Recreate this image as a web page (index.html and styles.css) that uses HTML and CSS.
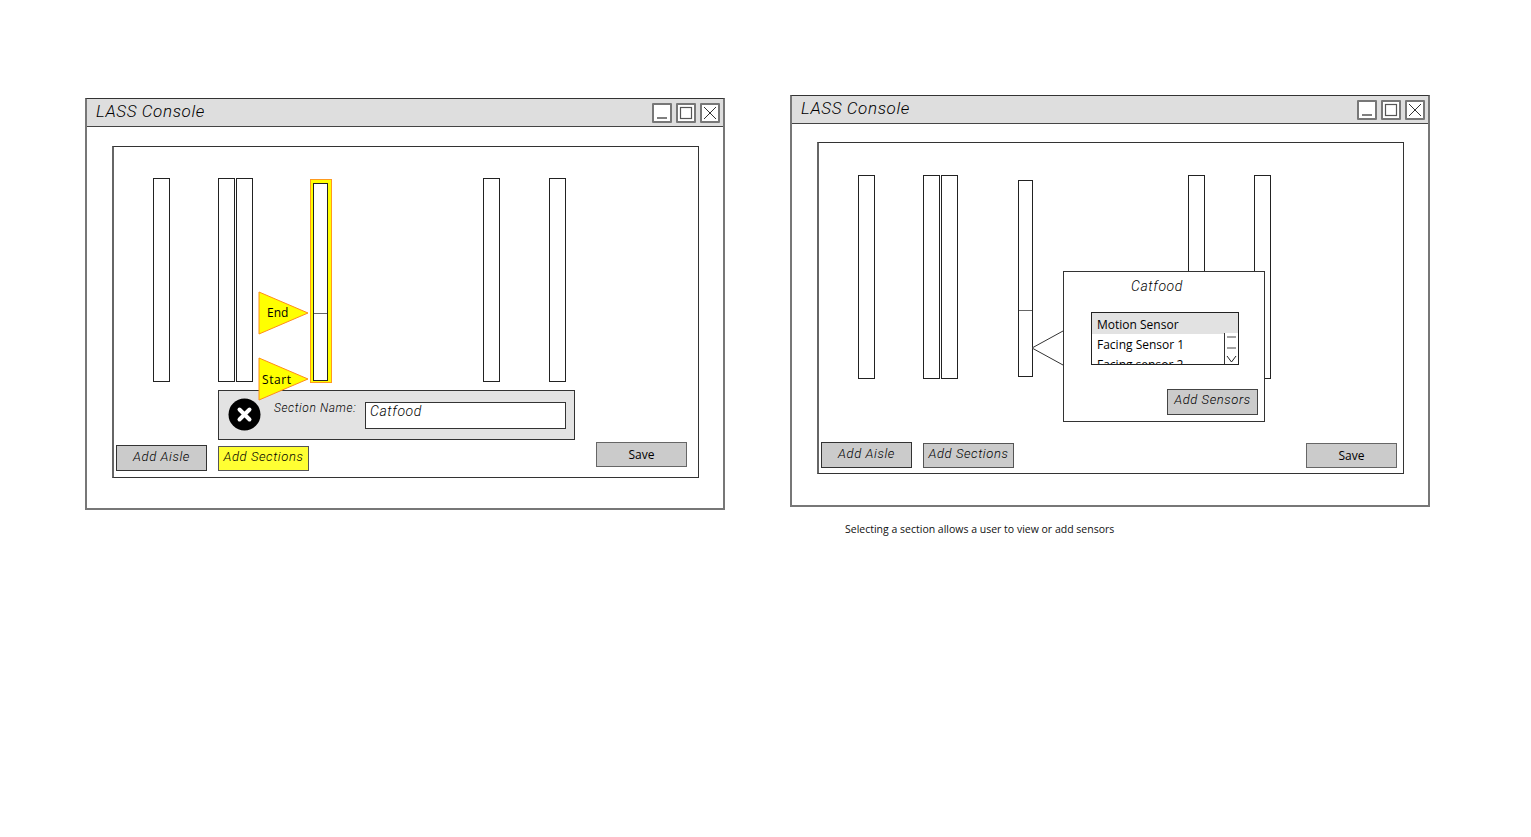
FILE: index.html
```html
<!DOCTYPE html>
<html lang="en">
<head>
    <meta charset="UTF-8">
    <meta name="viewport" content="width=device-width, initial-scale=1.0">
    <title>LASS Console mockups</title>
    <link rel="stylesheet" href="styles.css">
</head>
<body>
    <!-- Left window: adding a section -->
    <div class="window window-add">
        <div class="titlebar">
            <span class="title sketch">LASS Console</span>
            <div class="controls">
                <span class="control"><svg width="16" height="16"><path d="M3 13H13" stroke="#555" stroke-width="1.5"/></svg></span>
                <span class="control"><svg width="16" height="16"><rect x="2.5" y="2.5" width="11" height="11" fill="none" stroke="#555" stroke-width="1.2"/></svg></span>
                <span class="control"><svg width="16" height="16"><path d="M2 2L14 14M14 2L2 14" stroke="#333" stroke-width="1"/></svg></span>
            </div>
        </div>
        <div class="panel">
            <div class="aisles">
                <div class="aisle"></div>
                <div class="aisle wide-gap"></div>
                <div class="aisle tight-gap"></div>
                <div class="aisle section selected"><div class="section-top"></div></div>
                <div class="aisle far-gap"></div>
                <div class="aisle last-gap"></div>
            </div>

            <svg class="flag flag-end" width="52" height="45">
                <polygon points="1,1 50,22 1,43" fill="#ffff00" stroke="#ff8c1a" stroke-width="1"/>
                <text x="9" y="26">End</text>
            </svg>
            <svg class="flag flag-start" width="52" height="45">
                <polygon points="1,1 50,22 1,43" fill="#ffff00" stroke="#ff8c1a" stroke-width="1"/>
                <text class="flag-wide" x="4" y="27">Start</text>
            </svg>

            <div class="section-form">
                <svg class="close-icon" width="33" height="33">
                    <circle cx="16.5" cy="16.5" r="16" fill="#000"/>
                    <path d="M11.5 11.5L21.5 21.5M21.5 11.5L11.5 21.5" stroke="#fff" stroke-width="4" stroke-linecap="round"/>
                </svg>
                <span class="form-label sketch">Section Name:</span>
                <div class="form-input sketch">Catfood</div>
            </div>

            <div class="toolbar">
                <div class="btn sketch">Add Aisle</div>
                <div class="btn btn-yellow sketch">Add Sections</div>
                <div class="btn btn-save">Save</div>
            </div>
        </div>
    </div>

    <!-- Right window: section selected, sensors popup -->
    <div class="window window-view">
        <div class="titlebar">
            <span class="title sketch">LASS Console</span>
            <div class="controls">
                <span class="control"><svg width="16" height="16"><path d="M3 13H13" stroke="#555" stroke-width="1.5"/></svg></span>
                <span class="control"><svg width="16" height="16"><rect x="2.5" y="2.5" width="11" height="11" fill="none" stroke="#555" stroke-width="1.2"/></svg></span>
                <span class="control"><svg width="16" height="16"><path d="M2 2L14 14M14 2L2 14" stroke="#333" stroke-width="1"/></svg></span>
            </div>
        </div>
        <div class="panel">
            <div class="aisles">
                <div class="aisle"></div>
                <div class="aisle wide-gap"></div>
                <div class="aisle tight-gap"></div>
                <div class="aisle section"><div class="section-top"></div></div>
                <div class="aisle far-gap"></div>
                <div class="aisle last-gap"></div>
            </div>

            <div class="popup">
                <svg class="popup-arrow" width="33" height="36">
                    <path d="M32 1L1 18L32 35" fill="#fff" stroke="#333" stroke-width="1"/>
                </svg>
                <div class="popup-title sketch">Catfood</div>
                <div class="sensor-list">
                    <div class="sensor-row active">Motion Sensor</div>
                    <div class="sensor-row">Facing Sensor 1</div>
                    <div class="sensor-row">Facing sensor 2</div>
                    <svg class="scrollbar" width="13" height="31">
                        <path d="M2 4H11M2 15H11" stroke="#444" stroke-width="1"/>
                        <path d="M2 23L6.5 29L11 23" fill="none" stroke="#222" stroke-width="1"/>
                    </svg>
                </div>
                <div class="btn btn-sensors sketch">Add Sensors</div>
            </div>

            <div class="toolbar">
                <div class="btn sketch">Add Aisle</div>
                <div class="btn btn-plain sketch">Add Sections</div>
                <div class="btn btn-save">Save</div>
            </div>
        </div>
    </div>

    <p class="caption">Selecting a section allows a user to view or add sensors</p>
</body>
</html>
```

FILE: styles.css
```css
html, body {
    margin: 0;
    padding: 0;
    height: 100%;
    background: #fff;
    overflow: hidden;
}

body {
    position: relative;
    font-family: "Open Sans", sans-serif;
    color: #000;
}

/* thin scrawled lettering used for most wireframe labels */
.sketch {
    font-family: Roboto, sans-serif;
    font-weight: 300;
    font-style: italic;
    color: #000;
    letter-spacing: 0.6px;
}

.window {
    position: absolute;
    box-sizing: border-box;
    width: 640px;
    height: 412px;
    background: #fff;
    border: 2px solid #777;
    border-top: 1px solid #333;
}

.window-add {
    left: 85px;
    top: 98px;
}

.window-view {
    left: 790px;
    top: 95px;
}

.titlebar {
    display: flex;
    align-items: center;
    justify-content: space-between;
    box-sizing: border-box;
    height: 28px;
    padding: 0 3px 0 9px;
    background: #dedede;
    border-bottom: 1px solid #444;
}

.title {
    font-size: 17px;
    letter-spacing: 0.6px;
    margin-top: -4px;
}

.controls {
    display: flex;
    gap: 4px;
    margin-top: 1px;
}

.control {
    display: flex;
    width: 16px;
    height: 16px;
    border: 2px solid #777;
    border-radius: 1px;
    background: #fff;
}

.panel {
    position: relative;
    display: flex;
    flex-direction: column;
    box-sizing: border-box;
    width: 587px;
    height: 332px;
    margin: 19px 0 0 25px;
    background: #fff;
    border: 1px solid #333;
    border-left: 2px solid #666;
}

.window-view .panel {
    margin-top: 18px;
}

.aisles {
    display: flex;
    align-items: flex-start;
    padding: 31px 0 0 39px;
}

.window-view .aisles {
    padding-top: 32px;
}

.aisle {
    box-sizing: border-box;
    width: 17px;
    height: 204px;
    background: #fff;
    border: 1px solid #222;
}

.wide-gap {
    margin-left: 48px;
}

.tight-gap {
    margin-left: 1px;
}

.far-gap {
    margin-left: 155px;
}

.last-gap {
    margin-left: 49px;
}

.section {
    width: 15px;
    height: 197px;
    margin: 5px 0 0 60px;
}

.window-add .section {
    height: 198px;
}

.section-top {
    height: 129px;
    border-bottom: 1px solid #666;
}

.selected {
    box-shadow: 0 -1px 0 2px #ffff00, 1px -1px 0 2px #ffff00, 0 -1px 0 3px #ff9a1f, 1px -1px 0 3px #ff9a1f;
}

.flag {
    position: absolute;
    left: 144px;
}

.flag text {
    font-size: 12px;
    font-family: "Open Sans", sans-serif;
}

.flag text.flag-wide {
    letter-spacing: 0.6px;
}

.flag-end {
    top: 144px;
}

.flag-start {
    top: 210px;
}

.section-form {
    display: flex;
    align-items: flex-start;
    box-sizing: border-box;
    width: 357px;
    height: 50px;
    margin: 8px 0 0 104px;
    background: #e3e3e3;
    border: 1px solid #333;
}

.close-icon {
    margin: 7px 0 0 9px;
    flex: none;
}

.form-label {
    margin: 10px 0 0 13px;
    font-size: 12px;
    width: 91px;
    white-space: nowrap;
}

.form-input {
    box-sizing: border-box;
    width: 201px;
    height: 27px;
    padding: 0 0 0 4px;
    margin-top: 11px;
    background: #fff;
    border: 1px solid #333;
    font-size: 14px;
}

.toolbar {
    display: flex;
    align-items: flex-end;
    gap: 11px;
    margin-top: auto;
    padding: 0 11px 6px 2px;
}

.window-view .toolbar {
    padding: 0 6px 5px 2px;
}

.btn {
    box-sizing: border-box;
    display: flex;
    align-items: center;
    justify-content: center;
    width: 91px;
    height: 26px;
    padding-bottom: 3px;
    background: #cbcbcb;
    border: 1px solid #333;
    font-size: 13px;
    white-space: nowrap;
}

.btn-yellow {
    background: #ffff33;
    border-color: #555;
    height: 25px;
    padding-bottom: 4px;
}

.btn-plain {
    height: 25px;
    border-color: #555;
    padding-bottom: 4px;
}

.btn-save {
    margin-left: auto;
    height: 25px;
    padding-bottom: 0;
    border-color: #666;
    font-size: 12px;
}

.window-add .btn-save {
    margin-bottom: 4px;
}

.popup {
    position: absolute;
    left: 244px;
    top: 128px;
    box-sizing: border-box;
    width: 202px;
    height: 151px;
    background: #fff;
    border: 1px solid #333;
}

.popup-arrow {
    position: absolute;
    left: -33px;
    top: 58px;
}

.popup-title {
    padding: 5px 14px 0 0;
    font-size: 14px;
    text-align: center;
    line-height: 18px;
}

.sensor-list {
    position: relative;
    box-sizing: border-box;
    width: 148px;
    height: 53px;
    margin: 17px 0 0 27px;
    border: 1px solid #222;
    overflow: hidden;
}

.sensor-row {
    height: 20px;
    padding: 0 0 0 5px;
    font-size: 12px;
    line-height: 22px;
    white-space: nowrap;
}

.sensor-row.active {
    background: #e2e2e2;
    height: 21px;
    line-height: 24px;
}

.scrollbar {
    position: absolute;
    right: 0;
    bottom: 0;
    background: #fff;
    border-left: 1px solid #333;
}

.btn-sensors {
    margin: 24px 0 0 103px;
    height: 26px;
    padding-bottom: 5px;
    border-color: #444;
}

.caption {
    position: absolute;
    left: 845px;
    top: 521px;
    margin: 0;
    font-size: 10.5px;
    line-height: 16px;
    color: #111;
    white-space: nowrap;
}
```
